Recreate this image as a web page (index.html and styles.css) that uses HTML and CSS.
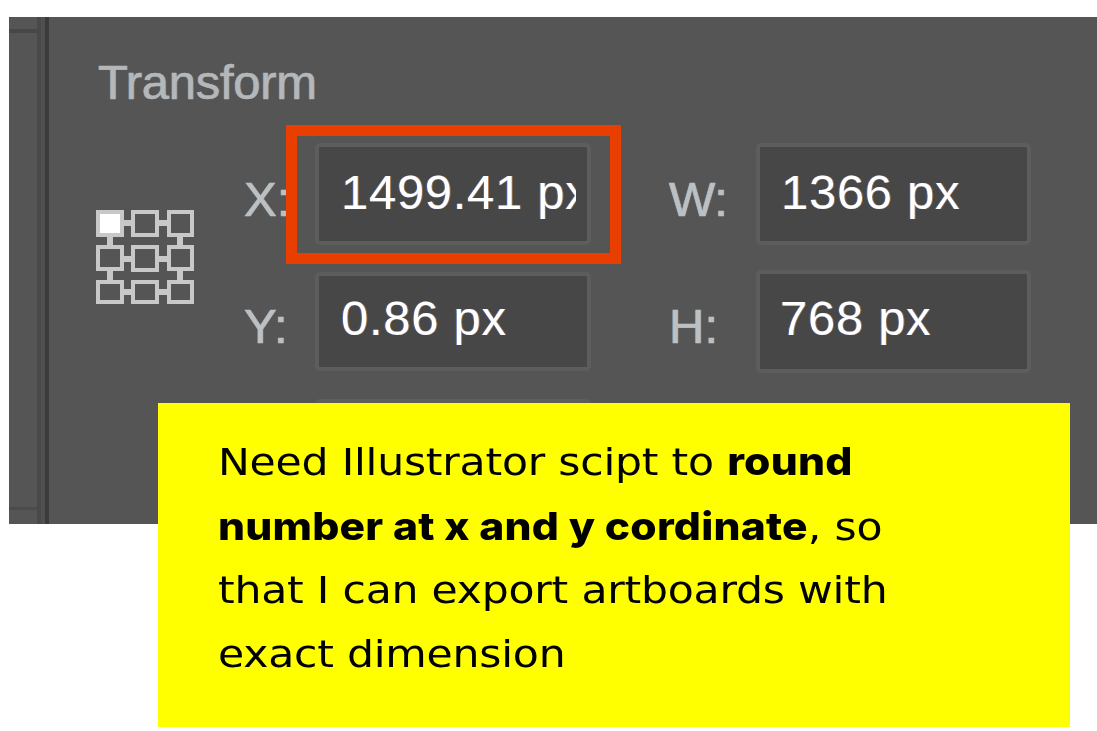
FILE: index.html
```html
<!DOCTYPE html>
<html lang="en">
<head>
<meta charset="utf-8">
<title>Transform</title>
<link rel="stylesheet" href="styles.css">
</head>
<body>
<main class="stage">
  <section class="panel">
    <div class="dock"><div class="dock-col"><span class="dock-rows"></span></div></div>
    <div class="content">
      <h2 class="title">Transform</h2>
      <div class="body">
        <svg class="ref" width="98" height="94" viewBox="0 0 98 94" aria-hidden="true">
          <g fill="#c8c8c8">
            <rect x="26" y="10" width="11" height="6"/><rect x="61" y="10" width="12" height="6"/>
            <rect x="26" y="46" width="11" height="6"/><rect x="61" y="46" width="12" height="6"/>
            <rect x="26" y="79" width="11" height="6"/><rect x="61" y="79" width="12" height="6"/>
            <rect x="11" y="26" width="6" height="10"/><rect x="81" y="26" width="6" height="10"/>
            <rect x="11" y="59" width="6" height="12"/><rect x="81" y="59" width="6" height="12"/>
          </g>
          <g fill="#555555" stroke="#c8c8c8" stroke-width="4">
            <rect x="2" y="2" width="24" height="23" fill="#fff"/><rect x="37" y="2" width="24" height="23"/><rect x="73" y="2" width="23" height="23"/>
            <rect x="2" y="37" width="24" height="22"/><rect x="37" y="37" width="24" height="23"/><rect x="73" y="37" width="23" height="22"/>
            <rect x="2" y="72" width="24" height="20"/><rect x="37" y="72" width="24" height="20"/><rect x="73" y="72" width="23" height="20"/>
          </g>
        </svg>
        <div class="fields">
          <span class="label">X:</span>
          <div class="field"><span class="value">1499.41 px</span></div>
          <span class="label label-wide">W:</span>
          <div class="field field-right"><span class="value">1366 px</span></div>
          <span class="label">Y:</span>
          <div class="field field-y"><span class="value">0.86 px</span></div>
          <span class="label label-wide">H:</span>
          <div class="field field-h"><span class="value">768 px</span></div>
          <span></span>
          <div class="field field-next"></div>
        </div>
      </div>
    </div>
  </section>
  <div class="highlight"></div>
  <aside class="note">
    <p>Need Illustrator scipt to <strong>round<br>number at x and y cordinate</strong>, so<br>that I can export artboards with<br>exact dimension</p>
  </aside>
</main>
</body>
</html>
```

FILE: styles.css
```css
* { box-sizing: border-box; }
html, body { margin: 0; height: 100%; background: #fff; overflow: hidden; }

.stage { position: relative; width: 1097px; height: 731px; padding: 17px 0 0 9px; }

.panel {
  display: flex;
  height: 507px;
  background: #555;
  overflow: hidden;
  font-family: "Liberation Sans", Arial, sans-serif;
}

.dock {
  flex: none;
  width: 40px;
  background: #505050;
  border-right: 4px solid #3b3b3b;
}
.dock-col {
  width: 32px;
  height: 100%;
  padding-top: 12px;
  background: #555;
  border-right: 4px solid #494949;
}
.dock-rows {
  display: block;
  height: 481px;
  border-top: 4px solid #474747;
  border-bottom: 3px solid #4b4b4b;
}

.content { flex: 1; padding: 37px 0 0 49px; }

.title {
  margin: 0;
  font-size: 49px;
  font-weight: 400;
  line-height: 56px;
  letter-spacing: -0.3px;
  color: #b4b8ba;
  filter: blur(0.6px);
  -webkit-text-stroke: 0.5px #b4b8ba;
  text-shadow: -1px 0 0 rgba(90, 140, 190, .55), 1px 0 0 rgba(190, 150, 110, .5);
}

.body { display: flex; margin-top: 33px; }

.ref { flex: none; margin-top: 67px; margin-left: -2px; }

.fields {
  display: grid;
  grid-template-columns: 71px 276px 165px 275px;
  row-gap: 25px;
  margin-left: 50px;
}

.label {
  font-size: 49px;
  line-height: 112px;
  height: 102px;
  color: #bcc0c2;
  filter: blur(0.6px);
  -webkit-text-stroke: 0.6px #bcc0c2;
  text-shadow: -1px 0 0 rgba(90, 140, 190, .5), 1px 0 0 rgba(190, 150, 110, .45);
}
.label-wide { padding-left: 78px; }

.field {
  display: flex;
  align-items: center;
  height: 102px;
  padding: 0 11px 5px 22px;
  background: #474747;
  border: 4px solid #5d5d5d;
  border-radius: 5px;
}
.field-right { padding-left: 21px; }
.field-y { height: 99px; margin-top: 2px; padding-bottom: 8px; }
.field-h { height: 103px; padding-left: 20px; padding-bottom: 8px; }
.field-next { height: 102px; margin-top: 1px; }

.value {
  display: block;
  overflow: hidden;
  white-space: nowrap;
  font-size: 49px;
  line-height: 60px;
  letter-spacing: 0.7px;
  color: #fff;
  filter: blur(0.4px);
  text-shadow: -1px 0 0 rgba(70, 120, 220, .6), 1px 0 0 rgba(230, 150, 70, .55);
}

.highlight {
  position: absolute;
  left: 286px;
  top: 125px;
  width: 335px;
  height: 139px;
  border: 11px solid #e83e00;
}

.note {
  position: absolute;
  left: 158px;
  top: 403px;
  width: 912px;
  height: 324px;
  padding: 27px 0 0 60px;
  background: #ff0;
}
.note p {
  width: fit-content;
  margin: 0;
  font-family: "DejaVu Sans", sans-serif;
  font-size: 38px;
  line-height: 63.5px;
  letter-spacing: -0.2px;
  color: #000;
  transform: scaleX(1.12);
  transform-origin: left top;
}
.note strong {
  font-family: Inter, "DejaVu Sans", sans-serif;
  font-weight: 800;
  letter-spacing: 0.2px;
}
```
